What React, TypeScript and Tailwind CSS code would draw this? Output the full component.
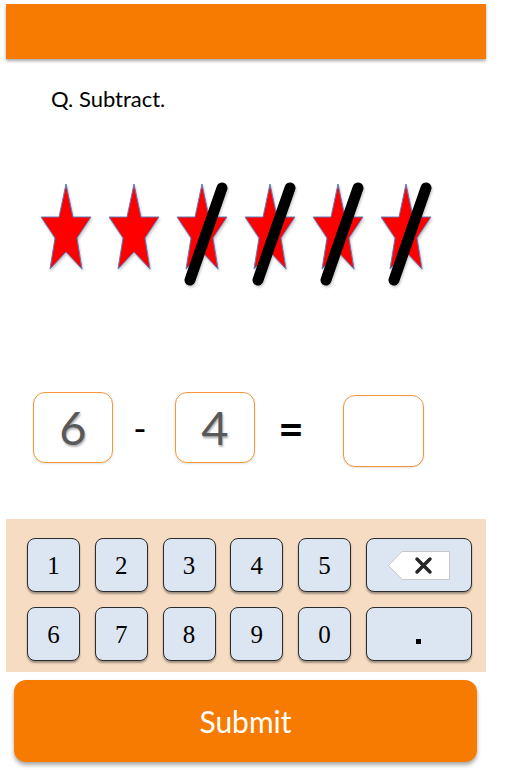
import React from 'react';

const STAR = '25,0 32,33 50,33 36,54 41,85 25,68 9,85 14,54 0,33 18,33';

function Star({ crossed }: { crossed?: boolean }) {
  return (
    <svg width="68" height="104" viewBox="0 0 68 104" className="shrink-0 overflow-visible">
      <g transform="translate(0,2)">
        <polygon points={STAR} fill="#ff0000" stroke="#5b7fbf" strokeWidth="1" strokeLinejoin="miter" />
      </g>
      {crossed && <line x1="45" y1="6" x2="13" y2="98" stroke="#000" strokeWidth="11" strokeLinecap="round" />}
    </svg>
  );
}

function NumBox({ value, className = '' }: { value?: string; className?: string }) {
  return (
    <div
      className={`flex items-center justify-center rounded-[12px] border border-[#f5963a] bg-white shadow-[0_1px_2px_rgba(0,0,0,0.12)] ${className}`}
    >
      <span className="text-[47px] leading-none text-[#595959] [text-shadow:1px_2px_2px_rgba(0,0,0,0.3)]">{value}</span>
    </div>
  );
}

function Key({ children, wide }: { children: React.ReactNode; wide?: boolean }) {
  return (
    <button
      className={`flex h-[54px] items-center justify-center rounded-[8px] border border-[#2b2b2b] bg-[#dce6f2] shadow-[0_2px_2px_rgba(0,0,0,0.35)] ${
        wide ? 'w-[106px]' : 'w-[53px]'
      }`}
    >
      {children}
    </button>
  );
}

function BackspaceIcon() {
  return (
    <svg width="62" height="29" viewBox="0 0 62 29">
      <polygon points="0.5,14.5 14,0.5 61.5,0.5 61.5,28.5 14,28.5" fill="#fff" stroke="#c8c8c8" strokeWidth="1" />
      <path d="M29 8 L42 21 M42 8 L29 21" stroke="#262626" strokeWidth="3.5" strokeLinecap="round" />
    </svg>
  );
}

export default function App() {
  const top = ['1', '2', '3', '4', '5'];
  const bottom = ['6', '7', '8', '9', '0'];

  return (
    <div className="min-h-[770px] w-[508px] bg-white font-['Lato','Open_Sans',sans-serif]">
      <div className="ml-[6px] pt-[4px]">
        <div className="h-[55px] w-[480px] bg-[#f77b00] shadow-[0_2px_3px_rgba(0,0,0,0.35)]" />
      </div>

      <p className="ml-[51px] mt-[27px] text-[22px] leading-[26px] text-black">Q. Subtract.</p>

      <div className="ml-[41px] mt-[70px] flex [filter:drop-shadow(1px_2px_1px_rgba(0,0,0,0.2))]">
        <Star />
        <Star />
        <Star crossed />
        <Star crossed />
        <Star crossed />
        <Star crossed />
      </div>

      <div className="ml-[33px] mt-[106px] flex items-start">
        <NumBox value="6" className="h-[71px] w-[80px]" />
        <span className="flex h-[71px] w-[62px] items-center justify-center pr-[8px] text-[36px] text-black">-</span>
        <NumBox value="4" className="h-[71px] w-[80px]" />
        <span className="flex h-[71px] w-[88px] items-center justify-center pr-[16px] text-[44px] font-bold text-black">=</span>
        <NumBox className="mt-[3px] h-[72px] w-[81px]" />
      </div>

      <div className="ml-[6px] mt-[52px] flex h-[153px] w-[480px] flex-col gap-[15px] bg-[#f5dcc3] pl-[21px] pt-[19px]">
        <div className="flex gap-[14.75px]">
          {top.map((d) => (
            <Key key={d}>
              <span className="font-['Liberation_Serif',serif] text-[25px] leading-none text-black">{d}</span>
            </Key>
          ))}
          <Key wide>
            <BackspaceIcon />
          </Key>
        </div>
        <div className="flex gap-[14.75px]">
          {bottom.map((d) => (
            <Key key={d}>
              <span className="font-['Liberation_Serif',serif] text-[25px] leading-none text-black">{d}</span>
            </Key>
          ))}
          <Key wide>
            <span className="mt-[14px] block h-[5px] w-[5px] bg-black" />
          </Key>
        </div>
      </div>

      <div className="ml-[14px] mt-[8px] flex h-[82px] w-[463px] items-center justify-center rounded-[12px] bg-[#f77b00] shadow-[0_3px_4px_rgba(0,0,0,0.35)]">
        <span className="text-[30px] text-white">Submit</span>
      </div>
    </div>
  );
}
